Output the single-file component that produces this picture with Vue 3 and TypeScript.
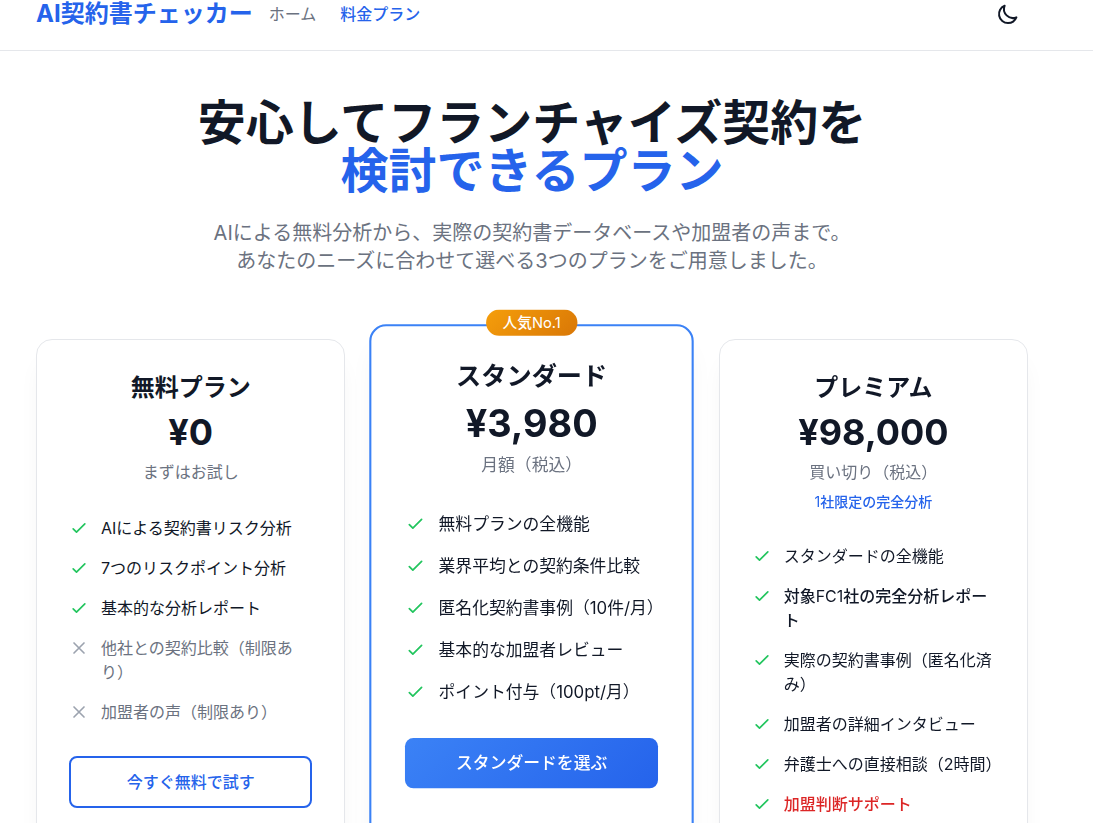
<script setup lang="ts">
type Tone = 'normal' | 'strong' | 'alert' | 'off'

interface Feature {
  text: string
  tone: Tone
}

interface Plan {
  name: string
  price: string
  term: string
  note?: string
  badge?: string
  action?: string
  featured: boolean
  features: Feature[]
}

interface Run {
  text: string
  latin: boolean
}

const item = (text: string, tone: Tone = 'normal'): Feature => ({ text, tone })

// Splits a medium-weight label into Latin and Japanese runs so that Latin keeps the regular weight.
const runs = (text: string): Run[] =>
  (text.match(/[\x21-\x7e]+|[^\x21-\x7e]+/g) ?? []).map((part) => ({
    text: part,
    latin: /^[\x21-\x7e]/.test(part),
  }))

const plans: Plan[] = [
  {
    name: '無料プラン',
    price: '¥0',
    term: 'まずはお試し',
    action: '今すぐ無料で試す',
    featured: false,
    features: [
      item('AIによる契約書リスク分析'),
      item('7つのリスクポイント分析'),
      item('基本的な分析レポート'),
      item('他社との契約比較（制限あり）', 'off'),
      item('加盟者の声（制限あり）', 'off'),
    ],
  },
  {
    name: 'スタンダード',
    price: '¥3,980',
    term: '月額（税込）',
    badge: '人気No.1',
    action: 'スタンダードを選ぶ',
    featured: true,
    features: [
      item('無料プランの全機能'),
      item('業界平均との契約条件比較'),
      item('匿名化契約書事例（10件/月）'),
      item('基本的な加盟者レビュー'),
      item('ポイント付与（100pt/月）'),
    ],
  },
  {
    name: 'プレミアム',
    price: '¥98,000',
    term: '買い切り（税込）',
    note: '1社限定の完全分析',
    featured: false,
    features: [
      item('スタンダードの全機能'),
      item('対象FC1社の完全分析レポート', 'strong'),
      item('実際の契約書事例（匿名化済み）'),
      item('加盟者の詳細インタビュー'),
      item('弁護士への直接相談（2時間）'),
      item('加盟判断サポート', 'alert'),
    ],
  },
]
</script>

<template>
  <div class="page" lang="ja">
    <header class="header">
      <a class="logo" href="#">AI契約書チェッカー</a>
      <nav class="nav">
        <a class="nav-link" href="#">ホーム</a>
        <a class="nav-link current" href="#" aria-current="page">料金プラン</a>
      </nav>
      <button class="theme" type="button" aria-label="ダークモード">
        <svg viewBox="0 0 24 24" aria-hidden="true">
          <path d="M20.354 15.354A9 9 0 018.646 3.646 9.003 9.003 0 0012 21a9.003 9.003 0 008.354-5.646z" />
        </svg>
      </button>
    </header>

    <main class="main">
      <section class="hero">
        <h1>安心してフランチャイズ契約を<br /><span>検討できるプラン</span></h1>
        <p>
          AIによる無料分析から、実際の契約書データベースや加盟者の声まで。<br />あなたのニーズに合わせて選べる3つのプランをご用意しました。
        </p>
      </section>

      <section class="plans">
        <article v-for="plan in plans" :key="plan.name" class="card" :class="{ featured: plan.featured }">
          <div v-if="plan.badge" class="badge">
            <span v-for="(run, i) in runs(plan.badge)" :key="i" :class="{ latin: run.latin }">{{ run.text }}</span>
          </div>
          <h2>{{ plan.name }}</h2>
          <div class="price">{{ plan.price }}</div>
          <p class="term">{{ plan.term }}</p>
          <p v-if="plan.note" class="note">
            <span v-for="(run, i) in runs(plan.note)" :key="i" :class="{ latin: run.latin }">{{ run.text }}</span>
          </p>
          <ul class="features">
            <li v-for="feature in plan.features" :key="feature.text" :class="feature.tone">
              <svg viewBox="0 0 24 24" aria-hidden="true">
                <path v-if="feature.tone === 'off'" d="M6 18L18 6M6 6l12 12" />
                <path v-else d="M5 13l4 4L19 7" />
              </svg>
              <div v-if="feature.tone === 'strong'">
                <span v-for="(run, i) in runs(feature.text)" :key="i" :class="{ latin: run.latin }">{{ run.text }}</span>
              </div>
              <div v-else>{{ feature.text }}</div>
            </li>
          </ul>
          <button v-if="plan.action" class="action" type="button">{{ plan.action }}</button>
        </article>
      </section>
    </main>
  </div>
</template>

<style>
body {
  margin: 0;
  background: #ffffff;
}
</style>

<style scoped>
.page {
  height: 100vh;
  overflow: hidden;
  box-sizing: border-box;
  background: #ffffff;
  color: #111827;
  font-family: Inter, "Noto Sans CJK JP", sans-serif;
  font-size: 16px;
  line-height: 24px;
}

.page * {
  box-sizing: border-box;
}

.header {
  display: flex;
  align-items: center;
  gap: 16px;
  height: 51px;
  padding: 0 65px 22px 36px;
  border-bottom: 1px solid #e5e7eb;
}

.logo {
  color: #2563eb;
  font-size: 24px;
  font-weight: 700;
  line-height: 28px;
  text-decoration: none;
  white-space: nowrap;
}

.nav {
  display: flex;
  gap: 24px;
}

.nav-link {
  color: #6b7280;
  text-decoration: none;
}

.nav-link.current {
  color: #2563eb;
  font-weight: 500;
}

.theme {
  margin-left: auto;
  padding: 0 8px;
  border: 0;
  background: none;
  color: #111827;
  cursor: pointer;
}

.theme svg {
  display: block;
  width: 24px;
  height: 24px;
}

svg {
  fill: none;
  stroke: currentColor;
  stroke-width: 2;
  stroke-linecap: round;
  stroke-linejoin: round;
}

.main {
  padding: 48px 65px 48px 36px;
}

.hero {
  margin-bottom: 64px;
  text-align: center;
}

h1 {
  margin: 0 0 24px;
  font-size: 48px;
  font-weight: 700;
  line-height: 48px;
}

h1 span {
  color: #2563eb;
}

.hero p {
  margin: 0;
  color: #6b7280;
  font-size: 20px;
  line-height: 28px;
}

.plans {
  display: grid;
  grid-template-columns: repeat(3, minmax(0, 1fr));
  gap: 32px;
  min-height: 590px;
}

.card {
  position: relative;
  padding: 32px;
  border: 1px solid #e5e7eb;
  border-radius: 16px;
  background: #ffffff;
  box-shadow: 0 20px 25px -5px rgba(0, 0, 0, 0.05);
  text-align: center;
}

.featured {
  border: 2px solid #3b82f6;
  transform: scale(1.05);
}

.badge {
  position: absolute;
  top: -16px;
  left: 50%;
  padding: 4px 16px;
  border-radius: 16px;
  background: linear-gradient(135deg, #f59e0b, #d97706);
  color: #ffffff;
  font-size: 14px;
  font-weight: 500;
  line-height: 17px;
  white-space: nowrap;
  transform: translateX(-50%);
}

h2 {
  margin: 0 0 8px;
  font-size: 24px;
  font-weight: 700;
  line-height: 32px;
}

.price {
  font-size: 36px;
  font-weight: 700;
  line-height: 40px;
}

.term {
  margin: 8px 0 0;
  color: #6b7280;
}

.note {
  margin: 8px 0 0;
  color: #2563eb;
  font-size: 14px;
  font-weight: 500;
  line-height: 20px;
}

.latin {
  font-weight: 400;
}

.features {
  display: flex;
  flex-direction: column;
  gap: 16px;
  margin: 32px 0;
  padding: 0;
  list-style: none;
  text-align: left;
}

.features li {
  display: flex;
  align-items: flex-start;
  gap: 12px;
}

.features svg {
  flex: none;
  width: 20px;
  height: 20px;
  margin-top: 2px;
  color: #22c55e;
}

.strong {
  font-weight: 500;
}

.alert {
  color: #dc2626;
  font-weight: 500;
}

.off {
  color: #6b7280;
}

.features .off svg {
  color: #9ca3af;
}

.action {
  display: block;
  width: 100%;
  padding: 12px 24px;
  border: 2px solid #2563eb;
  border-radius: 8px;
  background: #ffffff;
  color: #2563eb;
  font-family: inherit;
  font-size: 16px;
  font-weight: 500;
  line-height: 24px;
  cursor: pointer;
}

.featured .action {
  border: 0;
  background: linear-gradient(135deg, #3b82f6, #2563eb);
  color: #ffffff;
}
</style>
